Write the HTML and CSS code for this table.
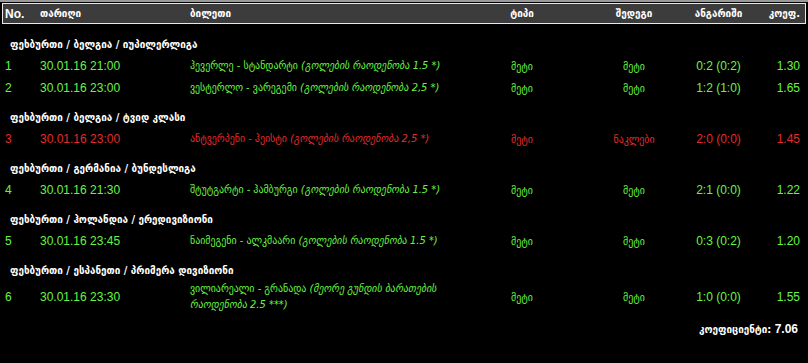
FILE: index.html
```html
<!DOCTYPE html>
<html lang="ka">
<head>
<meta charset="utf-8">
<title>ბილეთი</title>
<link rel="stylesheet" href="styles.css">
</head>
<body>
<div class="topline"></div>
<div class="page">
  <div class="grid head">
    <div>No.</div>
    <div class="ka">თარიღი</div>
    <div class="ka">ბილეთი</div>
    <div class="c ka">ტიპი</div>
    <div class="c ka">შედეგი</div>
    <div class="c ka">ანგარიში</div>
    <div class="r ka">კოეფ.</div>
  </div>

  <div class="group">ფეხბურთი / ბელგია / იუპილერლიგა</div>
  <div class="grid row win">
    <div>1</div><div>30.01.16 21:00</div>
    <div class="ticket">ჰევერლე - სტანდარტი <i>(გოლების რაოდენობა 1.5 *)</i></div>
    <div class="c ka">მეტი</div><div class="c ka">მეტი</div><div class="c">0:2 (0:2)</div><div class="r">1.30</div>
  </div>
  <div class="grid row win">
    <div>2</div><div>30.01.16 23:00</div>
    <div class="ticket">ვესტერლო - ვარეგემი <i>(გოლების რაოდენობა 2,5 *)</i></div>
    <div class="c ka">მეტი</div><div class="c ka">მეტი</div><div class="c">1:2 (1:0)</div><div class="r">1.65</div>
  </div>

  <div class="group">ფეხბურთი / ბელგია / ტვიდ კლასი</div>
  <div class="grid row lose">
    <div>3</div><div>30.01.16 23:00</div>
    <div class="ticket">ანტვერპენი - ჰეისტი <i>(გოლების რაოდენობა 2,5 *)</i></div>
    <div class="c ka">მეტი</div><div class="c ka">ნაკლები</div><div class="c">2:0 (0:0)</div><div class="r">1.45</div>
  </div>

  <div class="group">ფეხბურთი / გერმანია / ბუნდესლიგა</div>
  <div class="grid row win">
    <div>4</div><div>30.01.16 21:30</div>
    <div class="ticket">შტუტგარტი - ჰამბურგი <i>(გოლების რაოდენობა 1.5 *)</i></div>
    <div class="c ka">მეტი</div><div class="c ka">მეტი</div><div class="c">2:1 (0:0)</div><div class="r">1.22</div>
  </div>

  <div class="group">ფეხბურთი / ჰოლანდია / ერედივიზიონი</div>
  <div class="grid row win">
    <div>5</div><div>30.01.16 23:45</div>
    <div class="ticket">ნაიმეგენი - ალკმაარი <i>(გოლების რაოდენობა 1.5 *)</i></div>
    <div class="c ka">მეტი</div><div class="c ka">მეტი</div><div class="c">0:3 (0:2)</div><div class="r">1.20</div>
  </div>

  <div class="group">ფეხბურთი / ესპანეთი / პრიმერა დივიზიონი</div>
  <div class="grid row win">
    <div>6</div><div>30.01.16 23:30</div>
    <div class="ticket">ვილიარეალი - გრანადა <i>(მეორე გუნდის ბარათების</i><br><i>რაოდენობა 2.5 ***)</i></div>
    <div class="c ka">მეტი</div><div class="c ka">მეტი</div><div class="c">1:0 (0:0)</div><div class="r">1.55</div>
  </div>

  <div class="total"><span class="ka">კოეფიციენტი:</span> 7.06</div>
</div>
</body>
</html>
```
FILE: styles.css
```css
html, body {
  margin: 0;
  padding: 0;
  background: #000;
}
body {
  font-family: "Liberation Sans", Arial, sans-serif;
  font-size: 12px;
  color: #fff;
}
.ka {
  font-family: "DejaVu Sans Condensed", "DejaVu Sans", sans-serif;
  font-size: 11px;
}
.topline {
  height: 2px;
  background: #9a9a9a;
}
.page {
  padding: 1px 2px 0 2px;
}
.grid {
  display: grid;
  grid-template-columns: 35px 150px 278px 108px 116px 53px 55px;
  align-items: center;
}
.c { text-align: center; }
.r { text-align: right; }
.head {
  height: 19px;
  border: 1px solid #e8e8e8;
  background: #3c3c3c;
  padding: 0 6px 0 2px;
  font-weight: bold;
}
.group {
  height: 20px;
  line-height: 20px;
  margin-top: 9px;
  padding-left: 8px;
  font-weight: bold;
  font-family: "DejaVu Sans Condensed", "DejaVu Sans", sans-serif;
  font-size: 11px;
}
.head + .group { margin-top: 11px; }
.row {
  min-height: 22px;
  padding: 0 6px 0 3px;
}
.ticket {
  font-family: "DejaVu Sans Condensed", "DejaVu Sans", sans-serif;
  font-size: 11px;
  line-height: 16px;
}
.win { color: #66f542; }
.lose { color: #e42b2b; }
.total {
  text-align: right;
  padding: 9px 8px 0 0;
  font-size: 12px;
  font-weight: bold;
}
```
